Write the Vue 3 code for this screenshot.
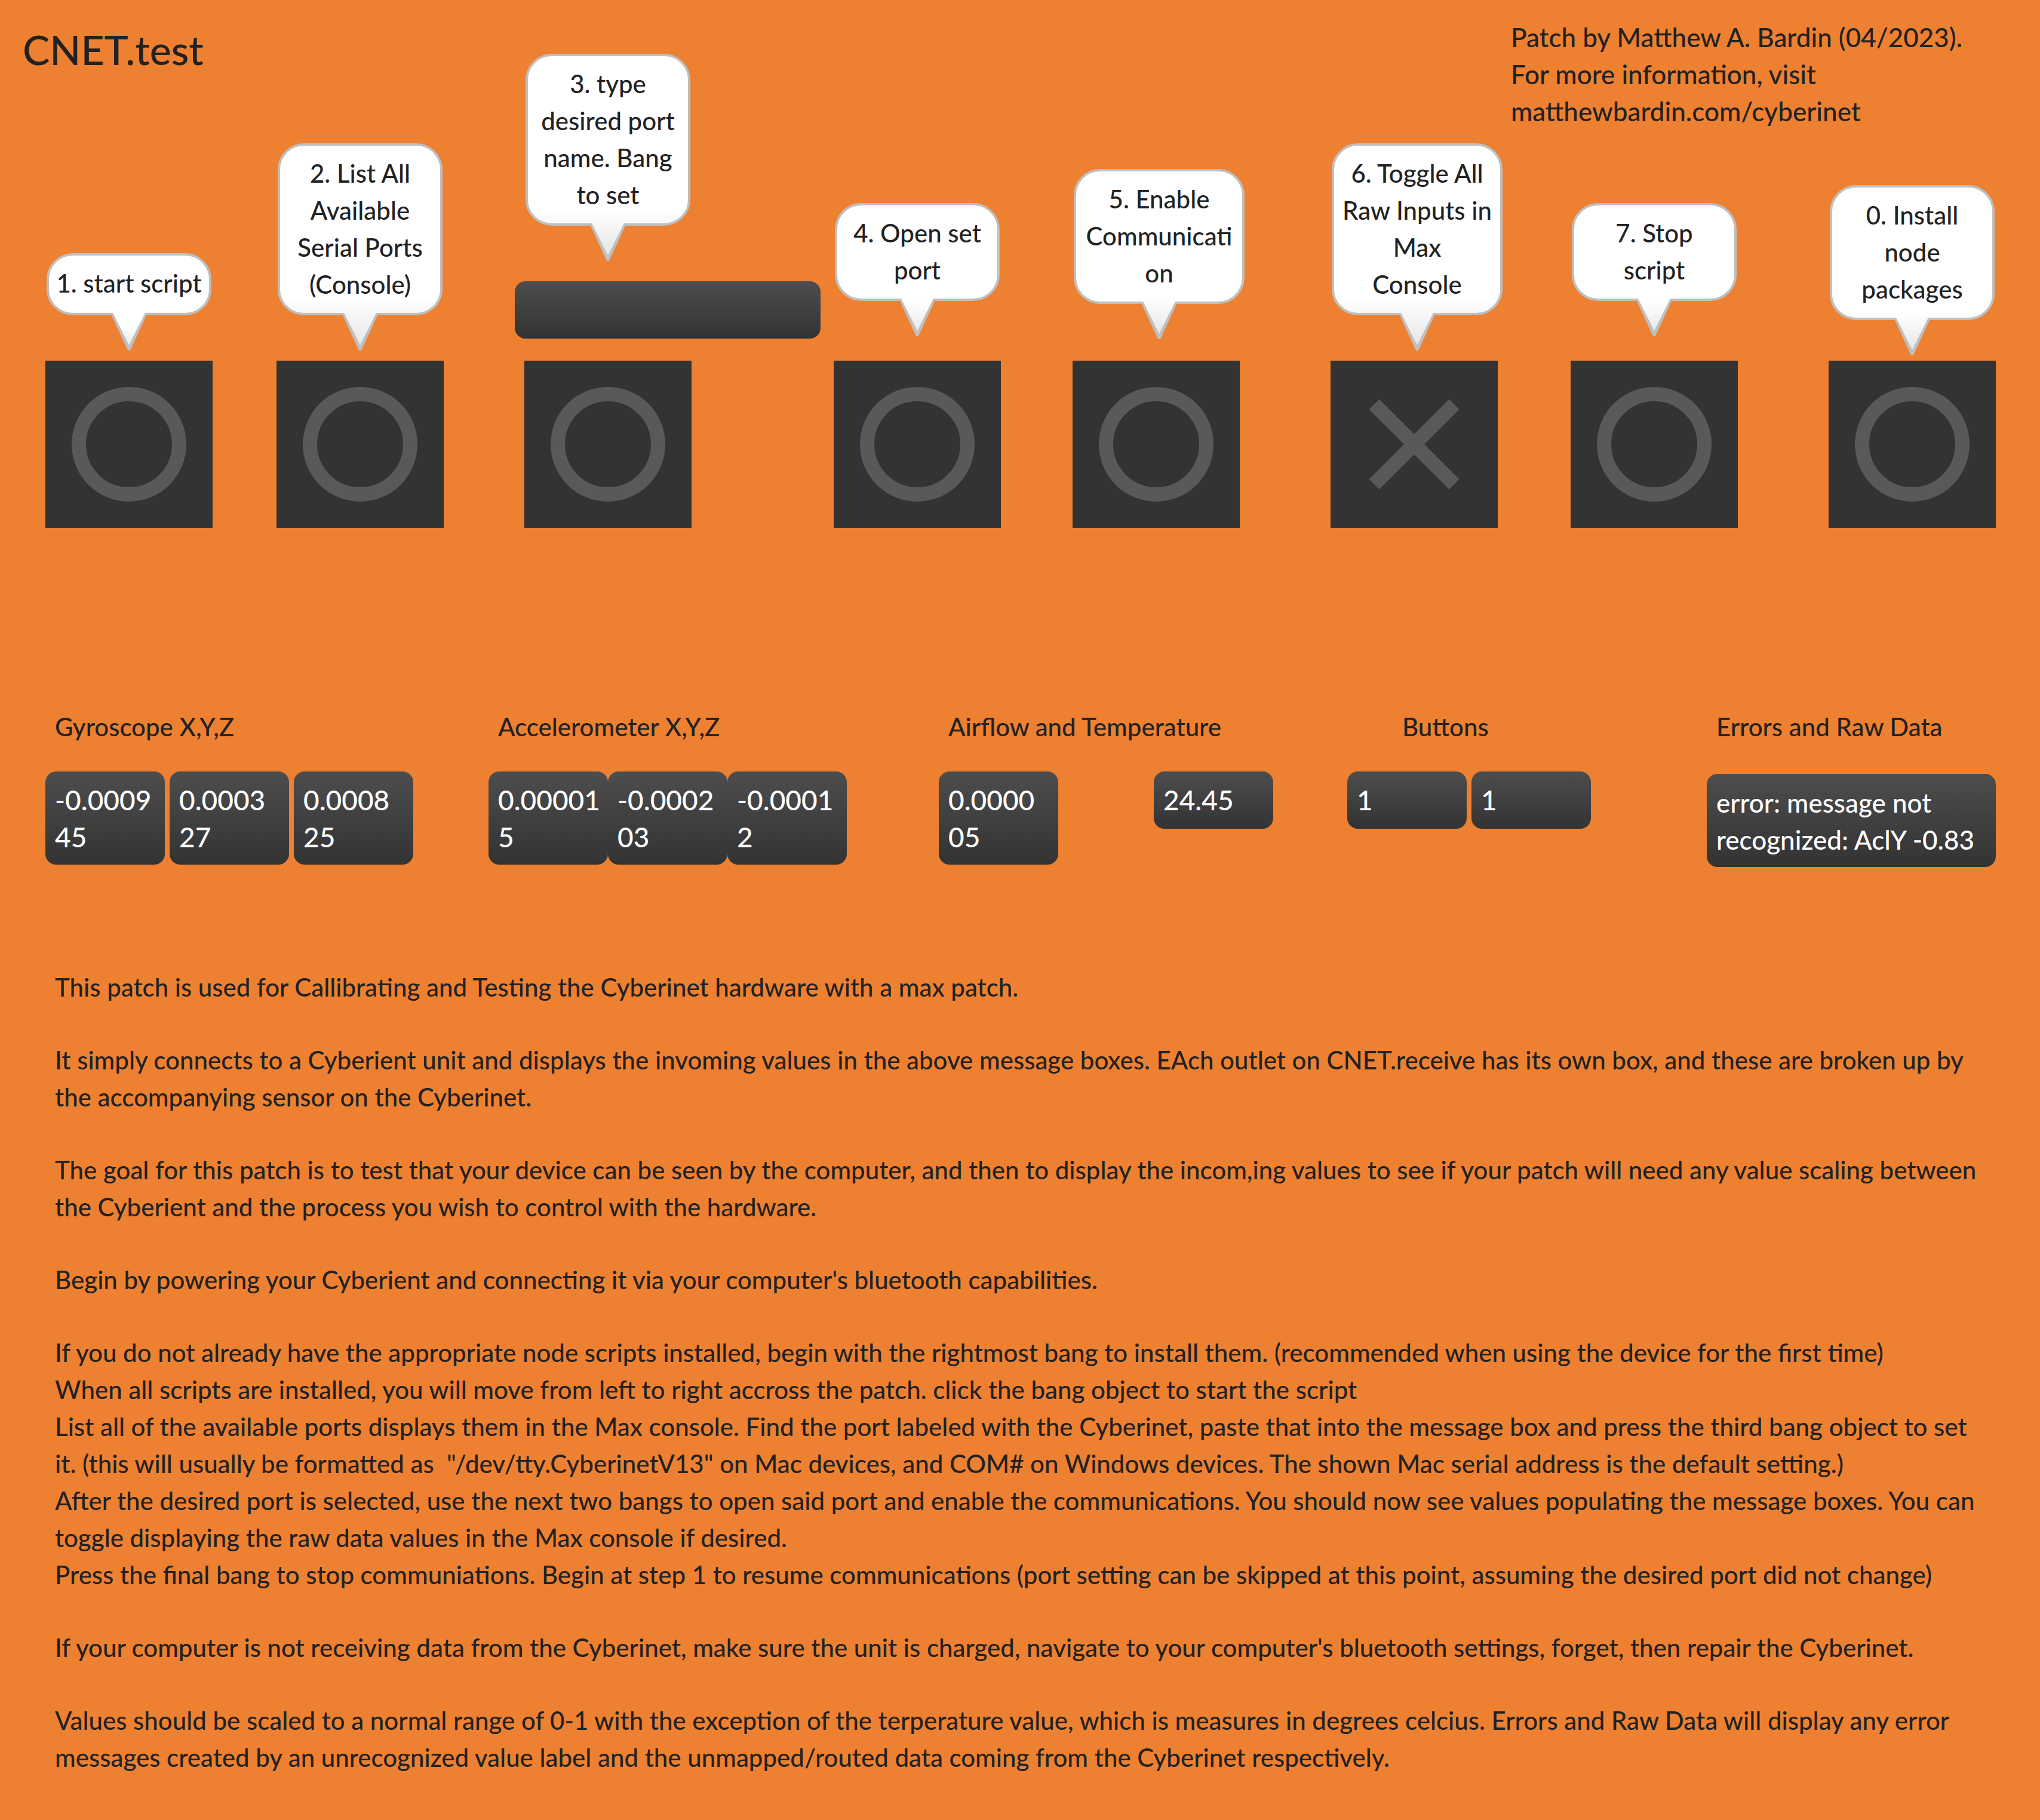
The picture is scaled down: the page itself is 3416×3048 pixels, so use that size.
<script setup>
import { ref } from 'vue'

const steps = [
  { id: 'start', lines: ['1. start script'], drop: 'near' },
  { id: 'list', lines: ['2. List All', 'Available', 'Serial Ports', '(Console)'], drop: 'near' },
  { id: 'set-port', lines: ['3. type', 'desired port', 'name. Bang', 'to set'], drop: 'field', field: true },
  { id: 'open', lines: ['4. Open set', 'port'], drop: 'far' },
  { id: 'enable', lines: ['5. Enable', 'Communicati', 'on'], drop: 'mid', wide: true },
  { id: 'raw', lines: ['6. Toggle All', 'Raw Inputs in', 'Max', 'Console'], drop: 'near', wide: true, toggle: true },
  { id: 'stop', lines: ['7. Stop', 'script'], drop: 'far' },
  { id: 'install', lines: ['0. Install', 'node', 'packages'], drop: 'touch' },
]

const sensors = [
  { title: 'Gyroscope X,Y,Z', kind: 'spaced', values: ['-0.0009\n45', '0.0003\n27', '0.0008\n25'] },
  { title: 'Accelerometer X,Y,Z', kind: 'joined', values: ['0.00001\n5', '-0.0002\n03', '-0.0001\n2'] },
  { title: 'Airflow and Temperature', kind: 'apart', values: ['0.0000\n05', '24.45'] },
  { title: 'Buttons', kind: 'spaced indented', values: ['1', '1'] },
  { title: 'Errors and Raw Data', kind: 'log', values: ['error: message not\nrecognized: AclY -0.83'] },
]

const notes = [
  ['This patch is used for Callibrating and Testing the Cyberinet hardware with a max patch.'],
  [
    'It simply connects to a Cyberient unit and displays the invoming values in the above message boxes. EAch outlet on CNET.receive has its own box, and these are broken up by',
    'the accompanying sensor on the Cyberinet.',
  ],
  [
    'The goal for this patch is to test that your device can be seen by the computer, and then to display the incom,ing values to see if your patch will need any value scaling between',
    'the Cyberient and the process you wish to control with the hardware.',
  ],
  ["Begin by powering your Cyberient and connecting it via your computer's bluetooth capabilities."],
  [
    'If you do not already have the appropriate node scripts installed, begin with the rightmost bang to install them. (recommended when using the device for the first time)',
    'When all scripts are installed, you will move from left to right accross the patch. click the bang object to start the script',
    'List all of the available ports displays them in the Max console. Find the port labeled with the Cyberinet, paste that into the message box and press the third bang object to set',
    'it. (this will usually be formatted as  "/dev/tty.CyberinetV13" on Mac devices, and COM# on Windows devices. The shown Mac serial address is the default setting.)',
    'After the desired port is selected, use the next two bangs to open said port and enable the communications. You should now see values populating the message boxes. You can',
    'toggle displaying the raw data values in the Max console if desired.',
    'Press the final bang to stop communiations. Begin at step 1 to resume communications (port setting can be skipped at this point, assuming the desired port did not change)',
  ],
  ["If your computer is not receiving data from the Cyberinet, make sure the unit is charged, navigate to your computer's bluetooth settings, forget, then repair the Cyberinet."],
  [
    'Values should be scaled to a normal range of 0-1 with the exception of the terperature value, which is measures in degrees celcius. Errors and Raw Data will display any error',
    'messages created by an unrecognized value label and the unmapped/routed data coming from the Cyberinet respectively.',
  ],
]

const port = ref('')
const rawInputs = ref(false)
</script>

<template>
  <main class="patch">
    <div class="top">
      <header class="header">
        <h1 class="title">CNET.test</h1>
        <p class="credit">Patch by Matthew A. Bardin (04/2023).<br>For more information, visit<br>matthewbardin.com/cyberinet</p>
      </header>

      <section class="steps" aria-label="Steps">
        <div v-for="step in steps" :key="step.id" class="step">
          <label class="bubble" :class="[step.drop, { wide: step.wide }]" :for="step.id">
            <span class="bubble-text">{{ step.lines.join('\n') }}</span>
          </label>
          <input v-if="step.field" v-model="port" class="box port" type="text" aria-label="Port name">
          <span v-if="step.toggle" class="pad">
            <input :id="step.id" v-model="rawInputs" class="toggle" type="checkbox">
            <svg class="mark" viewBox="0 0 280 280" aria-hidden="true">
              <path d="M73 73 207 207M207 73 73 207" />
            </svg>
          </span>
          <button v-else :id="step.id" class="pad" type="button">
            <svg class="mark" viewBox="0 0 280 280" aria-hidden="true">
              <circle cx="140" cy="140" r="84" />
            </svg>
          </button>
        </div>
      </section>
    </div>

    <section class="sensors" aria-label="Sensor values">
      <div v-for="group in sensors" :key="group.title" class="group" :class="group.kind">
        <h2 class="group-title">{{ group.title }}</h2>
        <div class="values">
          <output v-for="(value, i) in group.values" :key="i" class="box value">{{ value }}</output>
        </div>
      </div>
    </section>

    <section class="notes" aria-label="Instructions">
      <p v-for="(lines, i) in notes" :key="i" class="note">{{ lines.join('\n') }}</p>
    </section>
  </main>
</template>

<style>
html {
  background: #ee8031;
}
</style>

<style scoped>
.patch {
  color: #222;
  font-family: Futura, Lato, "Liberation Sans", sans-serif;
  font-size: 42px;
  font-weight: 500;
  line-height: 62px;
}

.top {
  display: grid;
}

.header {
  grid-area: 1 / 1;
  align-self: start;
  display: grid;
  grid-template-columns: 2492fr 886fr;
  padding: 31px 0 0 38px;
}

.title {
  margin: 0;
  font-size: 68px;
  font-weight: 500;
  line-height: 104px;
}

.credit {
  margin: 0;
  font-size: 44px;
  white-space: nowrap;
}

.steps {
  grid-area: 1 / 1;
  display: grid;
  grid-template-columns: 387fr 415fr 518fr 400fr 432fr 402fr 432fr 280fr;
  padding: 90px 74px 0 76px;
}

.step {
  display: flex;
  flex-direction: column;
  align-items: flex-start;
  justify-content: flex-end;
  min-width: 0;
}

.bubble {
  position: relative;
  box-sizing: border-box;
  width: 276px;
  margin-left: 2px;
  padding-bottom: 59px;
}

.bubble.wide {
  width: 286px;
}

.bubble.near {
  margin-bottom: 17px;
}

.bubble.far {
  margin-bottom: 41px;
}

.bubble.mid {
  margin-bottom: 36px;
}

.bubble.touch {
  margin-bottom: 9px;
}

.bubble.field {
  margin-bottom: 34px;
}

.bubble-text {
  display: block;
  box-sizing: border-box;
  min-height: 104px;
  padding: 15px 0 17px;
  border: 4px solid #bfbfbf;
  border-radius: 44px;
  background: linear-gradient(#fff 75%, #e3e3e3) 0 0 / 100% calc(100% + 59px) no-repeat border-box;
  text-align: center;
  white-space: pre;
}

.bubble::before,
.bubble::after {
  content: "";
  position: absolute;
  inset: 0;
}

.bubble::before {
  background: #bfbfbf;
  clip-path: polygon(calc(50% - 31px) calc(100% - 63px), calc(50% + 31px) calc(100% - 63px), calc(50% + 2px) 100%, calc(50% - 2px) 100%);
}

.bubble::after {
  background: linear-gradient(#fff 75%, #e3e3e3);
  clip-path: polygon(calc(50% - 27px) calc(100% - 63px), calc(50% + 27px) calc(100% - 63px), 50% calc(100% - 9px));
}

.box {
  box-sizing: border-box;
  min-height: 96px;
  padding: 17px 0 15px 16px;
  border: 0;
  border-radius: 18px;
  background: linear-gradient(#4d4d4d, #333);
  color: #fff;
  font: inherit;
  font-size: 46px;
}

.port {
  width: 512px;
  margin: 0 0 37px -16px;
}

.pad {
  position: relative;
  flex: none;
  width: 280px;
  height: 280px;
  padding: 0;
  border: 0;
  background: #333;
  cursor: pointer;
}

.toggle {
  display: block;
  width: 100%;
  height: 100%;
  margin: 0;
  appearance: none;
  cursor: pointer;
}

.mark {
  position: absolute;
  inset: 0;
  fill: none;
  stroke: #595959;
  stroke-width: 24;
  pointer-events: none;
}

.toggle:checked + .mark {
  stroke: #ee8031;
}

.sensors {
  display: grid;
  grid-template-columns: 742fr 754fr 684fr 602fr 484fr;
  padding: 302px 74px 0 76px;
}

.group {
  min-width: 0;
}

.group-title {
  margin: 0 0 44px;
  padding-left: 16px;
  font-size: inherit;
  font-weight: inherit;
  white-space: nowrap;
}

.indented .group-title {
  padding-left: 92px;
}

.values {
  display: flex;
  align-items: flex-start;
}

.spaced .values {
  gap: 8px;
}

.apart .values {
  gap: 160px;
}

.value {
  width: 200px;
  white-space: pre;
}

.log .value {
  width: 100%;
  margin-top: 4px;
  font-size: 44px;
}

.notes {
  display: flex;
  flex-direction: column;
  gap: 60px;
  padding: 170px 40px 40px 92px;
}

.note {
  margin: 0;
  white-space: pre-wrap;
}
</style>
